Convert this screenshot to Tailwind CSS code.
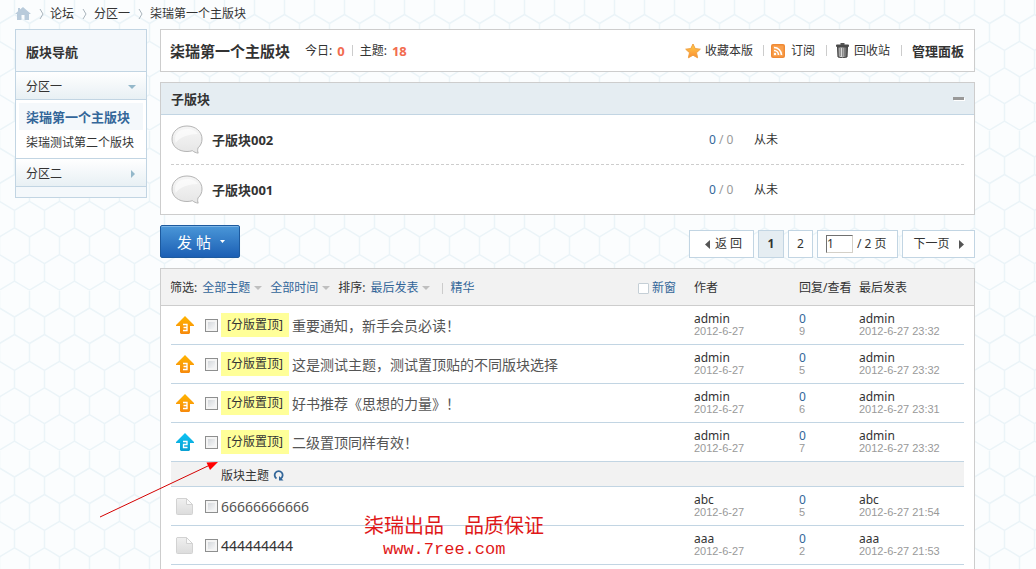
<!DOCTYPE html>
<html lang="zh-CN">
<head>
<meta charset="utf-8">
<meta name="viewport" content="width=device-width, initial-scale=1">
<title>柒瑞第一个主版块</title>
<script src="https://cdn.jsdelivr.net/npm/@tailwindcss/browser@4"></script>
</head>
<body class="relative h-screen overflow-hidden bg-[#fbfdfe] font-['Noto_Sans','Noto_Sans_CJK_SC',sans-serif] text-[12px] leading-[18px] text-[#333]">

<!-- honeycomb background -->
<svg class="absolute inset-0 -z-10 size-full" aria-hidden="true">
  <defs>
    <pattern id="comb" x="21" y="-30" width="30" height="160" patternUnits="userSpaceOnUse">
      <g fill="none" stroke="#ebf4f8" stroke-width="1.500">
        <path id="cell" d="M8.500 .5V18L23.500 27V44.500L8.500 53.500M8.500 18L-6.500 27M23.500 44.500L38.500 53.500M23.500 27L38.500 18M-6.500 44.500L8.500 53.500"/>
        <use href="#cell" y="53.300"/>
        <use href="#cell" y="106.600"/>
      </g>
    </pattern>
  </defs>
  <rect width="100%" height="100%" fill="url(#comb)"/>
</svg>

<!-- shared icons -->
<svg class="absolute size-0" aria-hidden="true">
  <symbol id="chev" viewBox="0 0 5 12"><path d="M1 1L4 6L1 11" fill="none" stroke="#a9b4bc"/></symbol>
  <symbol id="bubble" viewBox="0 0 32 30">
    <path d="M16 1C7.500 1 1 6.500 1 14s6.500 12.500 15 12.500c2 0 3.800-.3 5.400-.8 1.600 1.300 3.600 2.200 5.800 2.400-.7-1.400-.7-3.200-.2-5.200 2.600-2.200 4-5.200 4-8.900C31 6.500 24.500 1 16 1z" fill="url(#bub)" stroke="#b4b4b4"/>
    <path d="M4 14C4 8 9 4 16 4c5 0 9 2 11 5C18 9 9 12 4.500 18z" fill="#fff" opacity=".6"/>
  </symbol>
  <symbol id="uparrow" viewBox="0 0 18 18"><path d="M9 0L18 9V10H14V17L13 18H5L4 17V10H0V9z"/></symbol>
  <symbol id="file" viewBox="0 0 17 17">
    <path d="M1 .5H10.500L16.500 6.500V15.500Q16.500 16.500 15.500 16.500H1.500Q.5 16.500 .5 15.500V1z" fill="url(#doc)" stroke="#d2d2d2"/>
    <path d="M10.500 .5V6.500H16.500z" fill="#fafafa" stroke="#d2d2d2"/>
  </symbol>
  <symbol id="tri" viewBox="0 0 8 4"><path d="M0 0H8L4 4z" fill="#bfbfbf"/></symbol>
  <defs>
    <linearGradient id="bub" x1="0" y1="0" x2="0" y2="1"><stop offset="0" stop-color="#f6f6f6"/><stop offset="1" stop-color="#e6e6e6"/></linearGradient>
    <linearGradient id="doc" x1="0" y1="0" x2="0" y2="1"><stop offset="0" stop-color="#f0f0f0"/><stop offset="1" stop-color="#dcdcdc"/></linearGradient>
    <linearGradient id="org" x1="0" y1="0" x2="0" y2="1"><stop offset="0" stop-color="#ffb400"/><stop offset="1" stop-color="#f78a0c"/></linearGradient>
    <linearGradient id="blu" x1="0" y1="0" x2="0" y2="1"><stop offset="0" stop-color="#0cc3f4"/><stop offset="1" stop-color="#0aa0d2"/></linearGradient>
    <linearGradient id="star" x1="0" y1="0" x2="0" y2="1"><stop offset="0" stop-color="#ffd04a"/><stop offset="1" stop-color="#fb8c32"/></linearGradient>
    <linearGradient id="can" x1="0" y1="0" x2="1" y2="0"><stop offset="0" stop-color="#555"/><stop offset=".35" stop-color="#e4e4e4"/><stop offset="1" stop-color="#444"/></linearGradient>
  </defs>
</svg>

<div class="flex min-h-full flex-col pr-[61px] pl-[15px]">
  <nav class="flex h-[29px] shrink-0 items-center pb-[2px]" aria-label="位置">
    <a href="#" aria-label="首页" class="mr-[8px]"><svg class="h-[13px] w-[16px]" viewBox="0 0 16 13"><path d="M8 0L16 7H14V13H9.500V8H6.500V13H2V7H0L3 4.300V1H5V2.600z" fill="#b9cbdb"/></svg></a>
    <svg class="mr-[6px] h-[12px] w-[5px]"><use href="#chev"/></svg>
    <a href="#">论坛</a>
    <svg class="mr-[7px] ml-[8px] h-[12px] w-[5px]"><use href="#chev"/></svg>
    <a href="#">分区一</a>
    <svg class="mr-[7px] ml-[8px] h-[12px] w-[5px]"><use href="#chev"/></svg>
    <a href="#">柒瑞第一个主版块</a>
  </nav>

  <div class="flex flex-1 gap-[13px]">
    <aside class="h-[169px] w-[132px] shrink-0 border border-[#c2d5e3] bg-[#f4f8fb]">
      <h2 class="flex h-[41px] items-center pt-[2px] pl-[10px] text-[13px] font-bold">版块导航</h2>
      <button class="flex h-[29px] w-full items-center justify-between border-y border-[#c2d5e3] bg-linear-to-b from-white to-[#e8f0f4] pt-[2px] pr-[10px] pl-[10px]">分区一<svg class="h-[4px] w-[8px]" viewBox="0 0 8 4"><path d="M0 0H8L4 4z" fill="#94b8ca"/></svg></button>
      <ul class="flex h-[58px] flex-col bg-white px-[3px] pt-[3px]">
        <li class="flex h-[27px] items-center bg-[#f4f8fb] pl-[7px] text-[13px] font-bold text-[#336699]"><a href="#" class="whitespace-nowrap">柒瑞第一个主版块</a></li>
        <li class="flex h-[26px] items-center pl-[7px]"><a href="#" class="whitespace-nowrap">柒瑞测试第二个版块</a></li>
      </ul>
      <button class="flex h-[29px] w-full items-center justify-between border-y border-[#c2d5e3] bg-linear-to-b from-white to-[#e8f0f4] pt-[2px] pr-[11px] pl-[10px]">分区二<svg class="h-[8px] w-[4px]" viewBox="0 0 4 8"><path d="M0 0V8L4 4z" fill="#94b8ca"/></svg></button>
    </aside>

    <main class="flex min-w-0 flex-1 flex-col">
      <header class="flex h-[43px] shrink-0 items-center border border-[#cdcdcd] bg-white pr-[10px] pl-[9px]">
        <h1 class="mr-[15px] text-[15px] font-bold">柒瑞第一个主版块</h1>
        <p class="flex items-center gap-[5px]">今日:<b class="text-[13px] text-[#f26c4f]">0</b><i class="mx-[2px] h-[11px] w-px bg-[#ccc]"></i>主题:<b class="text-[13px] text-[#f26c4f]">18</b></p>
        <div class="ml-auto flex items-center gap-[10px]">
          <a href="#" class="flex items-center gap-[4px]"><svg class="size-[16px]" viewBox="0 0 16 16"><path d="M8 1L10.200 5.600L15.300 6.200L11.500 9.700L12.600 14.800L8 12.200L3.400 14.800L4.500 9.700L.7 6.200L5.800 5.600z" fill="url(#star)" stroke="#f0a040" stroke-linejoin="round"/></svg>收藏本版</a>
          <i class="h-[11px] w-px bg-[#ccc]"></i>
          <a href="#" class="-ml-[3px] flex items-center gap-[6px]"><svg class="size-[14px]" viewBox="0 0 14 14"><rect width="14" height="14" rx="2" fill="#f08a34"/><rect x="1.500" y="1.500" width="11" height="11" rx="1" fill="#f9a04e"/><g fill="none" stroke="#fff" stroke-width="1.600"><path d="M3 6.500A4.500 4.500 0 0 1 7.500 11M3 3.500A7.500 7.500 0 0 1 10.500 11"/></g><circle cx="4" cy="10" r="1.200" fill="#fff"/></svg>订阅</a>
          <i class="ml-[1px] h-[11px] w-px bg-[#ccc]"></i>
          <a href="#" class="-ml-[1px] flex items-center gap-[5px]"><svg class="h-[15px] w-[13px]" viewBox="0 0 13 15"><path d="M1.500 4H11.500L11 14Q6.500 15.500 2 14z" fill="url(#can)" stroke="#444"/><path d="M4.500 5V13M6.500 5V13.500M8.500 5V13" stroke="#777" stroke-width=".7"/><rect y="1.500" width="13" height="2.500" rx="1" fill="#4a4a4a"/><rect x="4.500" width="4" height="2" fill="#555"/></svg>回收站</a>
          <i class="ml-[1px] h-[11px] w-px bg-[#ccc]"></i>
          <a href="#" class="text-[13px] font-bold">管理面板</a>
        </div>
      </header>

      <section class="mt-[10px] shrink-0 border border-[#cdcdcd] bg-white">
        <div class="flex h-[32px] items-center justify-between border-b border-[#c2d5e3] bg-[#e5edf2] px-[10px]">
          <h2 class="text-[13px] font-bold">子版块</h2>
          <button aria-label="收起" class="h-[3px] w-[11px] bg-[#999] shadow-[1px_1px_0_#fff]"></button>
        </div>
        <ul class="px-[10px]">
          <li class="flex h-[50px] items-center border-b border-dashed border-[#cdcdcd]">
            <svg class="mr-[9px] h-[30px] w-[32px]"><use href="#bubble"/></svg>
            <a href="#" class="flex-1 text-[13px] font-bold">子版块002</a>
            <span class="w-[45px] text-[#999]"><span class="text-[#336699]">0</span> / 0</span>
            <span class="w-[210px]">从未</span>
          </li>
          <li class="flex h-[49px] items-center">
            <svg class="mr-[9px] h-[30px] w-[32px]"><use href="#bubble"/></svg>
            <a href="#" class="flex-1 text-[13px] font-bold">子版块001</a>
            <span class="w-[45px] text-[#999]"><span class="text-[#336699]">0</span> / 0</span>
            <span class="w-[210px]">从未</span>
          </li>
        </ul>
      </section>

      <div class="flex h-[53px] shrink-0 items-start justify-between pt-[10px]">
        <button class="flex h-[33px] w-[80px] items-center justify-center gap-[9px] rounded-[2px] border border-[#1d5a9e] bg-linear-to-b from-[#4a97d8] to-[#1c5fb4] pl-[2px] text-[15px] text-white shadow-[inset_0_1px_0_#7ab4e6]"><span>发 帖</span><svg class="h-[3px] w-[5px]" viewBox="0 0 5 3"><path d="M0 0H5L2.500 3z" fill="#fff"/></svg></button>
        <div class="mt-[5px] flex gap-[4px]">
          <a href="#" class="flex h-[28px] w-[65px] items-center justify-center gap-[5px] border border-[#c2d5e3] bg-white pl-[4px]"><svg class="h-[9px] w-[5px]" viewBox="0 0 5 9"><path d="M5 0V9L0 4.500z" fill="#555"/></svg>返 回</a>
          <strong class="flex h-[28px] w-[26px] items-center justify-center border border-[#c2d5e3] bg-[#e5edf2]">1</strong>
          <a href="#" class="flex h-[28px] w-[25px] items-center justify-center border border-[#c2d5e3] bg-white">2</a>
          <label class="flex h-[28px] w-[81px] items-center gap-[4px] border border-[#c2d5e3] bg-white pl-[8px]"><input type="text" value="1" aria-label="页码" class="h-[18px] w-[27px] border border-t-[#707070] border-r-[#d4d0c8] border-b-[#d4d0c8] border-l-[#707070] bg-white">/ 2 页</label>
          <a href="#" class="flex h-[28px] w-[73px] items-center justify-center gap-[9px] border border-[#c2d5e3] bg-white">下一页<svg class="h-[9px] w-[5px]" viewBox="0 0 5 9"><path d="M0 0V9L5 4.500z" fill="#555"/></svg></a>
        </div>
      </div>

      <section class="flex-1 border border-b-0 border-[#cdcdcd] bg-white">
        <table class="w-full table-fixed border-separate border-spacing-0 text-left">
          <colgroup><col class="w-[10px]"><col class="w-[34px]"><col><col class="w-[105px]"><col class="w-[60px]"><col class="w-[105px]"><col class="w-[10px]"></colgroup>
          <thead>
            <tr class="h-[37px] bg-[#f2f2f2] *:border-b *:border-[#cdcdcd] *:p-0 *:pt-[2px] *:font-normal">
              <th colspan="3" class="whitespace-nowrap">
                <div class="flex items-center pr-[18px] pl-[9px]">
                  <span class="mr-[5px]">筛选:</span>
                  <button class="mr-[8px] flex items-center gap-[4px] text-[#336699]">全部主题<svg class="h-[4px] w-[8px]"><use href="#tri"/></svg></button>
                  <button class="mr-[8px] flex items-center gap-[4px] text-[#336699]">全部时间<svg class="h-[4px] w-[8px]"><use href="#tri"/></svg></button>
                  <span class="mr-[5px]">排序:</span>
                  <button class="flex items-center gap-[4px] text-[#336699]">最后发表<svg class="h-[4px] w-[8px]"><use href="#tri"/></svg></button>
                  <i class="mr-[7px] ml-[12px] h-[11px] w-px bg-[#ccc]"></i>
                  <a href="#" class="text-[#336699]">精华</a>
                  <label class="ml-auto flex items-center gap-[3px] text-[#336699]"><input type="checkbox" class="size-[11px] appearance-none rounded-[1px] border border-[#c5cfd6] bg-white">新窗</label>
                </div>
              </th>
              <th>作者</th>
              <th class="whitespace-nowrap">回复/查看</th>
              <th>最后发表</th>
              <th></th>
            </tr>
          </thead>
          <tbody class="leading-[13px]">
            <tr class="h-[39px] *:p-0 *:not-first:not-last:border-b *:border-[#c2d5e3]">
              <td></td>
              <td><svg class="ml-[5px] size-[18px]" viewBox="0 0 18 18" role="img" aria-label="置顶 3"><use href="#uparrow" fill="url(#org)"/><path d="M7 8.500H11V14.500H7M7.500 11.500H11" fill="none" stroke="#fff" stroke-width="1.300"/></svg></td>
              <td><div class="flex items-center"><input type="checkbox" aria-label="选择" class="mr-[3px] size-[13px] appearance-none border border-[#8e8f8f] bg-linear-to-br from-[#ccd0d5] to-white shadow-[inset_0_0_0_2px_#f4f4f4]"><a href="#" class="mr-[3px] bg-[#ffff99] px-[6px] py-[5px] leading-[14px]">[分版置顶]</a><a href="#" class="text-[14px] text-[#555]">重要通知，新手会员必读！</a></div></td>
              <td><a href="#">admin</a><div class="font-['Liberation_Sans',sans-serif] text-[11px] text-[#999]">2012-6-27</div></td>
              <td><a href="#" class="text-[#336699]">0</a><div class="font-['Liberation_Sans',sans-serif] text-[11px] text-[#999]">9</div></td>
              <td><a href="#">admin</a><div class="font-['Liberation_Sans',sans-serif] text-[11px] text-[#999]">2012-6-27 23:32</div></td>
              <td></td>
            </tr>
            <tr class="h-[39px] *:p-0 *:not-first:not-last:border-b *:border-[#c2d5e3]">
              <td></td>
              <td><svg class="ml-[5px] size-[18px]" viewBox="0 0 18 18" role="img" aria-label="置顶 3"><use href="#uparrow" fill="url(#org)"/><path d="M7 8.500H11V14.500H7M7.500 11.500H11" fill="none" stroke="#fff" stroke-width="1.300"/></svg></td>
              <td><div class="flex items-center"><input type="checkbox" aria-label="选择" class="mr-[3px] size-[13px] appearance-none border border-[#8e8f8f] bg-linear-to-br from-[#ccd0d5] to-white shadow-[inset_0_0_0_2px_#f4f4f4]"><a href="#" class="mr-[3px] bg-[#ffff99] px-[6px] py-[5px] leading-[14px]">[分版置顶]</a><a href="#" class="text-[14px] text-[#555]">这是测试主题，测试置顶贴的不同版块选择</a></div></td>
              <td><a href="#">admin</a><div class="font-['Liberation_Sans',sans-serif] text-[11px] text-[#999]">2012-6-27</div></td>
              <td><a href="#" class="text-[#336699]">0</a><div class="font-['Liberation_Sans',sans-serif] text-[11px] text-[#999]">5</div></td>
              <td><a href="#">admin</a><div class="font-['Liberation_Sans',sans-serif] text-[11px] text-[#999]">2012-6-27 23:32</div></td>
              <td></td>
            </tr>
            <tr class="h-[39px] *:p-0 *:not-first:not-last:border-b *:border-[#c2d5e3]">
              <td></td>
              <td><svg class="ml-[5px] size-[18px]" viewBox="0 0 18 18" role="img" aria-label="置顶 3"><use href="#uparrow" fill="url(#org)"/><path d="M7 8.500H11V14.500H7M7.500 11.500H11" fill="none" stroke="#fff" stroke-width="1.300"/></svg></td>
              <td><div class="flex items-center"><input type="checkbox" aria-label="选择" class="mr-[3px] size-[13px] appearance-none border border-[#8e8f8f] bg-linear-to-br from-[#ccd0d5] to-white shadow-[inset_0_0_0_2px_#f4f4f4]"><a href="#" class="mr-[3px] bg-[#ffff99] px-[6px] py-[5px] leading-[14px]">[分版置顶]</a><a href="#" class="text-[14px] text-[#555]">好书推荐《思想的力量》！</a></div></td>
              <td><a href="#">admin</a><div class="font-['Liberation_Sans',sans-serif] text-[11px] text-[#999]">2012-6-27</div></td>
              <td><a href="#" class="text-[#336699]">0</a><div class="font-['Liberation_Sans',sans-serif] text-[11px] text-[#999]">6</div></td>
              <td><a href="#">admin</a><div class="font-['Liberation_Sans',sans-serif] text-[11px] text-[#999]">2012-6-27 23:31</div></td>
              <td></td>
            </tr>
            <tr class="h-[39px] *:p-0 *:not-first:not-last:border-b *:border-[#c2d5e3]">
              <td></td>
              <td><svg class="ml-[5px] size-[18px]" viewBox="0 0 18 18" role="img" aria-label="置顶 2"><use href="#uparrow" fill="url(#blu)"/><path d="M7 8.500H11V11.500H7.500V14.500H11.500" fill="none" stroke="#fff" stroke-width="1.300"/></svg></td>
              <td><div class="flex items-center"><input type="checkbox" aria-label="选择" class="mr-[3px] size-[13px] appearance-none border border-[#8e8f8f] bg-linear-to-br from-[#ccd0d5] to-white shadow-[inset_0_0_0_2px_#f4f4f4]"><a href="#" class="mr-[3px] bg-[#ffff99] px-[6px] py-[5px] leading-[14px]">[分版置顶]</a><a href="#" class="text-[14px] text-[#555]">二级置顶同样有效！</a></div></td>
              <td><a href="#">admin</a><div class="font-['Liberation_Sans',sans-serif] text-[11px] text-[#999]">2012-6-27</div></td>
              <td><a href="#" class="text-[#336699]">0</a><div class="font-['Liberation_Sans',sans-serif] text-[11px] text-[#999]">7</div></td>
              <td><a href="#">admin</a><div class="font-['Liberation_Sans',sans-serif] text-[11px] text-[#999]">2012-6-27 23:32</div></td>
              <td></td>
            </tr>
            <tr class="h-[25px] *:p-0">
              <td></td>
              <td colspan="5" class="border-b border-[#c2d5e3] bg-[#f2f2f2]"><div class="flex items-center gap-[4px] pt-[2px] pl-[50px]">版块主题<button aria-label="刷新"><svg class="size-[11px]" viewBox="0 0 11 11"><path d="M3.500 8.500A4 4 0 1 1 7.800 8.500" fill="none" stroke="#336699" stroke-width="1.800"/><path d="M6 6V10.500H10.500z" fill="#336699"/></svg></button></div></td>
              <td></td>
            </tr>
            <tr class="h-[39px] *:p-0 *:not-first:not-last:border-b *:border-[#c2d5e3]">
              <td></td>
              <td><svg class="ml-[5px] size-[17px]"><use href="#file"/></svg></td>
              <td><div class="flex items-center"><input type="checkbox" aria-label="选择" class="mr-[3px] size-[13px] appearance-none border border-[#8e8f8f] bg-linear-to-br from-[#ccd0d5] to-white shadow-[inset_0_0_0_2px_#f4f4f4]"><a href="#" class="text-[14px] text-[#555]">66666666666</a></div></td>
              <td><a href="#">abc</a><div class="font-['Liberation_Sans',sans-serif] text-[11px] text-[#999]">2012-6-27</div></td>
              <td><a href="#" class="text-[#336699]">0</a><div class="font-['Liberation_Sans',sans-serif] text-[11px] text-[#999]">5</div></td>
              <td><a href="#">abc</a><div class="font-['Liberation_Sans',sans-serif] text-[11px] text-[#999]">2012-6-27 21:54</div></td>
              <td></td>
            </tr>
            <tr class="h-[39px] *:p-0 *:not-first:not-last:border-b *:border-[#c2d5e3]">
              <td></td>
              <td><svg class="ml-[5px] size-[17px]"><use href="#file"/></svg></td>
              <td><div class="flex items-center"><input type="checkbox" aria-label="选择" class="mr-[3px] size-[13px] appearance-none border border-[#8e8f8f] bg-linear-to-br from-[#ccd0d5] to-white shadow-[inset_0_0_0_2px_#f4f4f4]"><a href="#" class="text-[14px] text-[#333]">444444444</a></div></td>
              <td><a href="#">aaa</a><div class="font-['Liberation_Sans',sans-serif] text-[11px] text-[#999]">2012-6-27</div></td>
              <td><a href="#" class="text-[#336699]">0</a><div class="font-['Liberation_Sans',sans-serif] text-[11px] text-[#999]">2</div></td>
              <td><a href="#">aaa</a><div class="font-['Liberation_Sans',sans-serif] text-[11px] text-[#999]">2012-6-27 21:53</div></td>
              <td></td>
            </tr>
          </tbody>
        </table>
      </section>
    </main>
  </div>
</div>

<!-- red annotation over the list -->
<svg class="pointer-events-none absolute top-[458px] left-[98px] h-[62px] w-[124px]" viewBox="0 0 124 62" aria-hidden="true">
  <path d="M2 59L112 7" stroke="#d40000" fill="none"/>
  <path d="M120 4L108.500 4.500L112 12z" fill="#f00"/>
</svg>
<div class="pointer-events-none absolute top-[517px] left-[364px] font-['Liberation_Mono','Noto_Sans_CJK_SC',monospace] text-[20px] leading-[22px] whitespace-nowrap text-[#e01818]">
  <p>柒瑞出品　品质保证</p>
  <p class="pl-[19px] text-[17px]">www.7ree.com</p>
</div>
</body>
</html>
